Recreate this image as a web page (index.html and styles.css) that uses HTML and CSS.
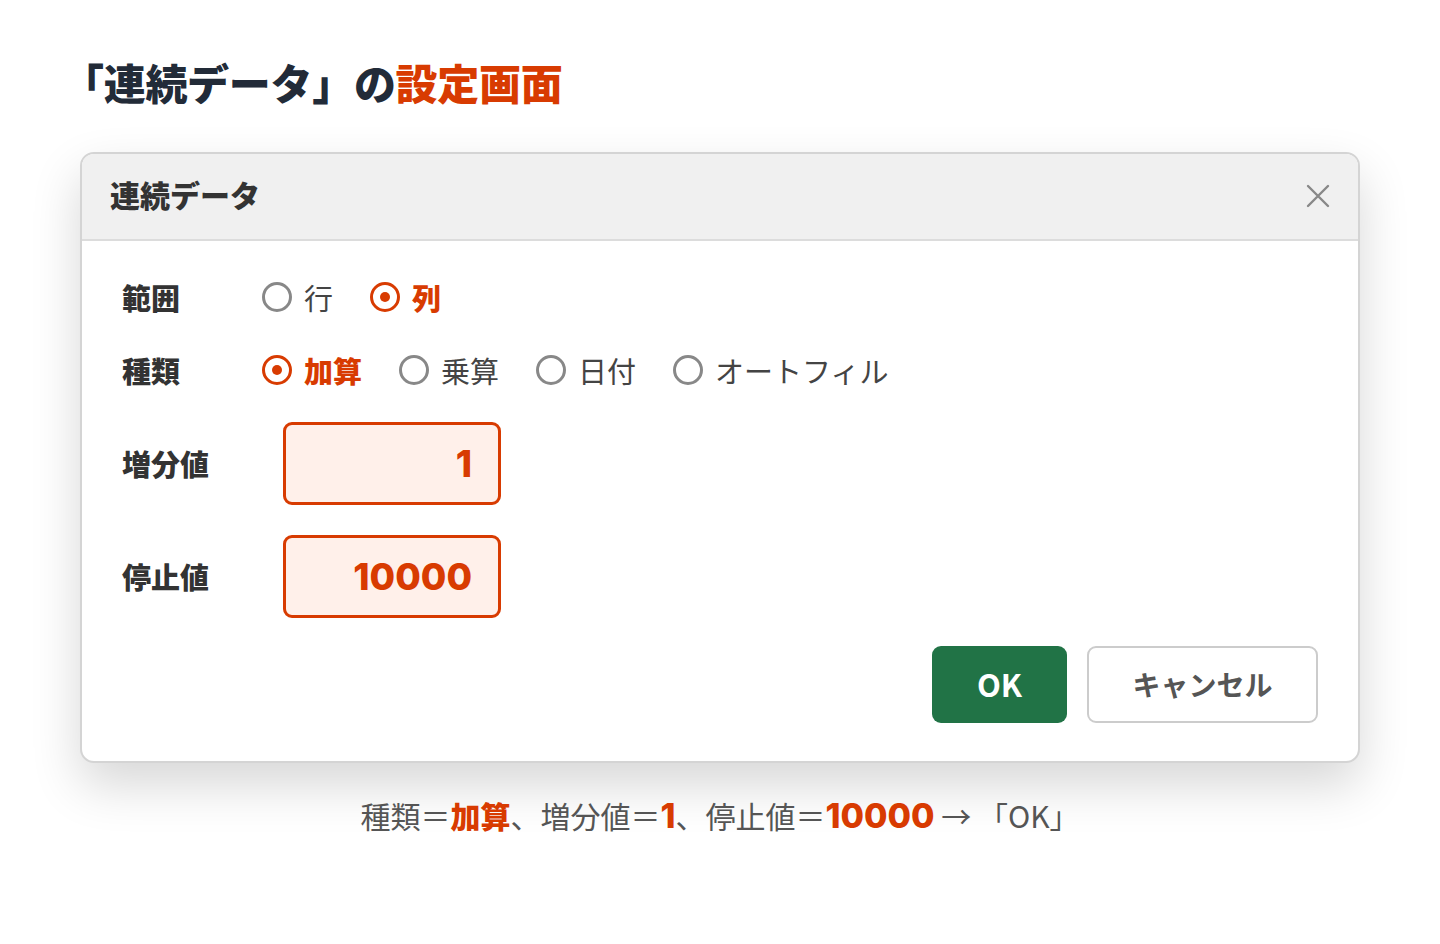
FILE: index.html
```html
<!DOCTYPE html>
<html lang="ja">
<head>
<meta charset="utf-8">
<link rel="stylesheet" href="styles.css">
</head>
<body>
<main class="page">
  <h1 class="page-title">「連続データ」の<span class="accent">設定画面</span></h1>

  <section class="dialog">
    <header class="dialog-head">
      <h2 class="dialog-title">連続データ</h2>
      <svg class="close" width="24" height="24" viewBox="0 0 24 24">
        <path d="M2 2 L22 22 M22 2 L2 22" stroke="#888" stroke-width="2.4" stroke-linecap="round"/>
      </svg>
    </header>

    <div class="dialog-body">
      <div class="row">
        <span class="label">範囲</span>
        <div class="options">
          <span class="opt"><i class="radio"></i>行</span>
          <span class="opt on"><i class="radio"></i>列</span>
        </div>
      </div>
      <div class="row">
        <span class="label">種類</span>
        <div class="options">
          <span class="opt on"><i class="radio"></i>加算</span>
          <span class="opt"><i class="radio"></i>乗算</span>
          <span class="opt"><i class="radio"></i>日付</span>
          <span class="opt"><i class="radio"></i>オートフィル</span>
        </div>
      </div>
      <div class="row row-field">
        <span class="label label-wide">増分値</span>
        <div class="field">1</div>
      </div>
      <div class="row row-field">
        <span class="label label-wide">停止値</span>
        <div class="field">10000</div>
      </div>

      <div class="actions">
        <button class="btn btn-ok">OK</button>
        <button class="btn btn-cancel">キャンセル</button>
      </div>
    </div>
  </section>

  <p class="caption">種類＝<b>加算</b>、増分値＝<b class="num">1</b>、停止値＝<b class="num">10000</b> → 「OK」</p>
</main>
</body>
</html>
```

FILE: styles.css
```css
body {
    margin: 0;
    background: #fff;
    font-family: "Noto Sans CJK JP", "Noto Sans", sans-serif;
    color: #333;
}
.page {
    width: 1280px;
    margin: 0 auto;
    padding-top: 52px;
}
.page-title {
    margin: 0 0 40px -18px;
    font-size: 42px;
    font-weight: 900;
    line-height: 60px;
    color: #222b38;
    letter-spacing: -0.3px;
}
.accent {
    color: #d83b01;
}
.dialog {
    border: 2px solid #d4d4d4;
    border-radius: 14px;
    overflow: hidden;
    background: #fff;
    box-shadow: 0 22px 50px rgba(0, 0, 0, 0.16);
}
.dialog-head {
    display: flex;
    align-items: center;
    justify-content: space-between;
    height: 85px;
    padding: 0 28px 0 28px;
    background: #f0f0f0;
    border-bottom: 2px solid #dcdcdc;
}
.dialog-title {
    margin: 0 0 5px 0;
    font-size: 30px;
    font-weight: 900;
    color: #333;
}
.close {
    margin-bottom: 1px;
}
.dialog-body {
    padding: 19px 40px 38px 40px;
}
.row {
    display: flex;
    align-items: center;
    height: 73px;
}
.row-field {
    height: 112px;
    padding-top: 1px;
}
.label {
    width: 140px;
    flex-shrink: 0;
    font-size: 29px;
    font-weight: 900;
    color: #333;
}
.label-wide {
    width: 161px;
}
.options {
    display: flex;
    align-items: center;
    gap: 37px;
}
.opt {
    display: flex;
    align-items: center;
    gap: 12px;
    font-size: 29px;
    color: #444;
}
.opt.on {
    color: #d83b01;
    font-weight: 900;
}
.radio {
    width: 24px;
    height: 24px;
    border: 3px solid #888;
    border-radius: 50%;
    position: relative;
}
.opt.on .radio {
    border-color: #d83b01;
}
.opt.on .radio::after {
    content: "";
    position: absolute;
    left: 7px;
    top: 7px;
    width: 10px;
    height: 10px;
    border-radius: 50%;
    background: #d83b01;
}
.field {
    box-sizing: border-box;
    width: 218px;
    height: 83px;
    padding-right: 26px;
    border: 3px solid #d83b01;
    border-radius: 9px;
    background: #fff0ea;
    display: flex;
    align-items: center;
    justify-content: flex-end;
    font-family: Inter, "Noto Sans", sans-serif;
    font-weight: 800;
    font-size: 37px;
    color: #d83b01;
}
.actions {
    display: flex;
    justify-content: flex-end;
    gap: 20px;
    margin-top: 14px;
}
.btn {
    height: 77px;
    border-radius: 9px;
    font-family: "Noto Sans CJK JP", "Noto Sans", sans-serif;
    font-weight: 700;
    cursor: pointer;
}
.btn-ok {
    width: 135px;
    border: 0;
    background: #217346;
    color: #fff;
    font-size: 31px;
    padding-bottom: 3px;
}
.btn-cancel {
    width: 231px;
    border: 2px solid #cccccc;
    background: #fff;
    color: #555;
    font-size: 28px;
    padding-bottom: 3px;
}
.caption {
    margin: 30px 0 0 0;
    text-align: center;
    font-size: 30px;
    color: #555;
}
.caption b {
    color: #d83b01;
    font-weight: 900;
}
.caption .num {
    font-family: Inter, "Noto Sans", sans-serif;
    font-weight: 800;
    font-size: 34px;
}
```
